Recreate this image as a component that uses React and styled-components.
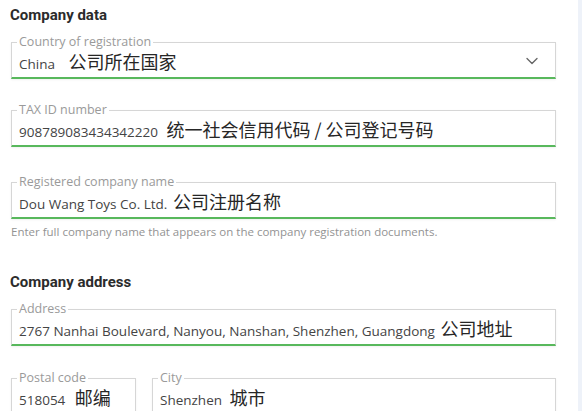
import React from 'react'
import styled, { createGlobalStyle } from 'styled-components'
import { ChevronDown } from 'lucide-react'

const green = '#58b85c'
const labelGrey = '#9a9a9a'

const GlobalStyle = createGlobalStyle`
  html, body { margin: 0; padding: 0; background: #fff; }
  body { font-family: "Open Sans", "Noto Sans CJK SC", sans-serif; }
`

const Page = styled.div`
  display: flex;
  width: 582px;
  height: 411px;
  overflow: hidden;
`

const Main = styled.div`
  flex: 1;
  padding: 6px 22px 0 11px;
`

const Strip = styled.div`
  width: 4px;
  background: #eef2f9;
`

const Heading = styled.h2`
  margin: 0 0 11px -1px;
  font-family: Roboto, "Liberation Sans", sans-serif;
  font-weight: 700;
  font-size: 15px;
  line-height: 18px;
  color: #2b2b2b;
`

const Field = styled.fieldset`
  margin: 0;
  padding: 0 13px 2px 5px;
  border: 1px solid #d6d6d6;
  border-bottom: 2px solid ${green};
  box-shadow: 0 1px 2px rgba(0, 0, 0, 0.06);
  min-width: 0;
`

const Legend = styled.legend`
  padding: 0 2px;
  font-size: 12.5px;
  line-height: 14px;
  color: ${labelGrey};
`

const Value = styled.div`
  box-sizing: border-box;
  display: flex;
  align-items: center;
  justify-content: space-between;
  height: 26px;
  padding: 0 0 3px 2px;
  white-space: nowrap;
`

const Text = styled.span`
  font-family: "Open Sans", sans-serif;
  font-size: 13.5px;
  color: #444;
  white-space: pre;
`

const Cn = styled.span`
  margin-left: ${p => p.$gap || 0}px;
  font-family: "Noto Sans CJK SC", sans-serif;
  font-size: 18px;
  color: #262626;
`

const Chevron = styled(ChevronDown)`
  color: #666;
  flex: none;
`

const Group = styled.div`
  margin-bottom: ${p => p.$after ?? 25}px;
`

const Help = styled.p`
  margin: 5px 0 0;
  font-size: 11.5px;
  line-height: 15px;
  color: #939393;
`

const Row = styled.div`
  display: grid;
  grid-template-columns: 125px 1fr;
  gap: 16px;
`

const Input = ({ label, value, cn, gap, select }) => (
  <Field>
    <Legend>{label}</Legend>
    <Value>
      <span>
        <Text>{value} </Text>
        <Cn $gap={gap}>{cn}</Cn>
      </span>
      {select && <Chevron size={20} strokeWidth={1.6} />}
    </Value>
  </Field>
)

export default function App() {
  return (
    <Page>
      <GlobalStyle />
      <Main>
        <Heading>Company data</Heading>
        <Group $after={24}>
          <Input label="Country of registration" value="China" cn="公司所在国家" gap={10} select />
        </Group>
        <Group $after={28}>
          <Input label="TAX ID number" value="908789083434342220" cn="统一社会信用代码 / 公司登记号码" gap={5} />
        </Group>
        <Group $after={34}>
          <Input label="Registered company name" value="Dou Wang Toys Co. Ltd." cn="公司注册名称" gap={2} />
          <Help>Enter full company name that appears on the company registration documents.</Help>
        </Group>
        <Heading>Company address</Heading>
        <Group>
          <Input
            label="Address"
            value="2767 Nanhai Boulevard, Nanyou, Nanshan, Shenzhen, Guangdong"
            cn="公司地址"
            gap={2}
          />
        </Group>
        <Row>
          <Input label="Postal code" value="518054" cn="邮编" gap={6} />
          <Input label="City" value="Shenzhen" cn="城市" gap={4} />
        </Row>
      </Main>
      <Strip />
    </Page>
  )
}
